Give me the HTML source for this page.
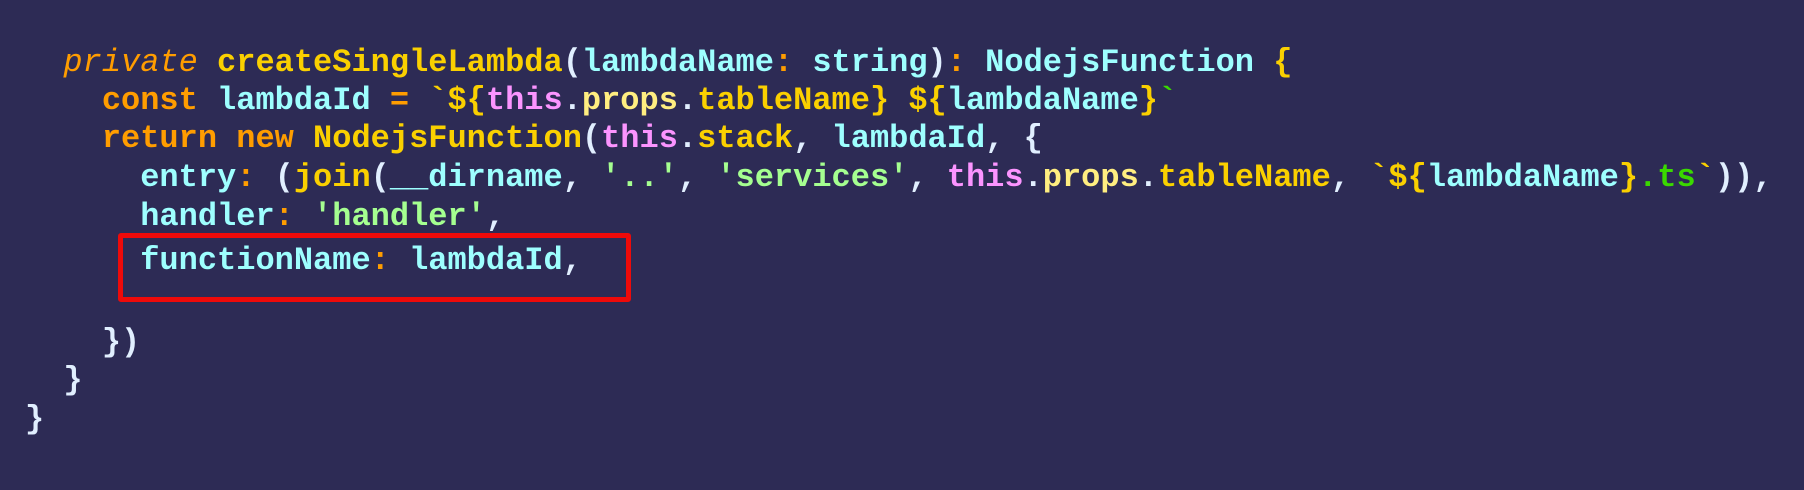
<!DOCTYPE html>
<html><head><meta charset="utf-8"><style>
html,body{margin:0;padding:0}
body{width:1804px;height:490px;background:#2d2b55;position:relative;overflow:hidden;font-family:"Liberation Mono","DejaVu Sans Mono",monospace;font-size:32px;color:#e1efff;font-weight:bold}
.l{position:absolute;left:25px;height:39px;line-height:39px;white-space:pre}
.k{color:#ff9d00}.f{color:#fad000}.i{color:#9effff}.s{color:#a5ff90}.t{color:#fb94ff}.p{color:#ffee80}.g{color:#3ad900}
.box{position:absolute;left:118px;top:233px;width:503px;height:59px;border:5px solid #ee0a0a;border-radius:3px}
</style></head><body>
<div class="l" style="top:43px">  <span class="k" style="font-style:italic;font-weight:normal">private</span> <span class="f">createSingleLambda</span>(<span class="i">lambdaName</span><span class="k">:</span> <span class="i">string</span>)<span class="k">:</span> <span class="i">NodejsFunction</span> <span class="f">{</span></div>
<div class="l" style="top:81px">    <span class="k">const</span> <span class="i">lambdaId</span> <span class="k">=</span> <span class="f">`${</span><span class="t">this</span>.<span class="p">props</span>.<span class="f">tableName</span><span class="f">}</span> <span class="f">${</span><span class="i">lambdaName</span><span class="f">}</span><span class="g">`</span></div>
<div class="l" style="top:119px">    <span class="k">return</span> <span class="k">new</span> <span class="f">NodejsFunction</span>(<span class="t">this</span>.<span class="f">stack</span>, <span class="i">lambdaId</span>, {</div>
<div class="l" style="top:158px">      <span class="i">entry</span><span class="k">:</span> (<span class="f">join</span>(<span class="i">__dirname</span>, <span class="s">'..'</span>, <span class="s">'services'</span>, <span class="t">this</span>.<span class="p">props</span>.<span class="f">tableName</span>, <span class="f">`${</span><span class="i">lambdaName</span><span class="f">}</span><span class="g">.ts</span><span class="f">`</span>)),</div>
<div class="l" style="top:197px">      <span class="i">handler</span><span class="k">:</span> <span class="s">'handler'</span>,</div>
<div class="l" style="top:241px">      <span class="i">functionName</span><span class="k">:</span> <span class="i">lambdaId</span>,</div>
<div class="l" style="top:323px">    })</div>
<div class="l" style="top:361px">  }</div>
<div class="l" style="top:400px">}</div>
<div class="box"></div>
</body></html>
